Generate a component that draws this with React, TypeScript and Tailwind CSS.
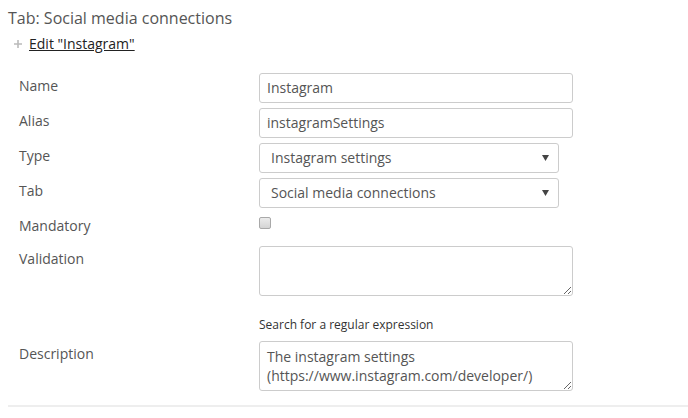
import React from 'react';

const labelCls = 'w-[240px] shrink-0 pt-[3px] text-[14px] leading-[20px] text-[#555]';
const boxCls = 'border border-[#ccc] rounded-[3px] bg-white text-[14px] text-[#555]';

function Row({ label, children, className = '' }: { label: string; children: React.ReactNode; className?: string }) {
  return (
    <div className={`flex ${className}`}>
      <div className={labelCls}>{label}</div>
      <div>{children}</div>
    </div>
  );
}

function TextInput({ value }: { value: string }) {
  return <div className={`${boxCls} h-[30px] w-[314px] px-[7px] leading-[28px]`}>{value}</div>;
}

function Select({ value }: { value: string }) {
  return (
    <div className={`${boxCls} h-[30px] w-[300px] pl-[11px] pr-[8px] flex items-center justify-between`}>
      <span className="leading-[28px]">{value}</span>
      <svg width="7" height="6" viewBox="0 0 7 6" className="mr-[1px]">
        <path d="M0 0 H7 L3.5 6 Z" fill="#444" />
      </svg>
    </div>
  );
}

function TextArea({ value }: { value?: string }) {
  return (
    <textarea
      readOnly
      defaultValue={value}
      className={`${boxCls} block h-[50px] w-[314px] px-[7px] pt-[5px] leading-[19px] outline-none`}
    />
  );
}

export default function App() {
  return (
    <div className="w-[688px] h-[418px] bg-white font-['Open_Sans',sans-serif] overflow-hidden">
      <div className="pl-[8px] pt-[7px] text-[16px] leading-[22px] text-[#555]">Tab: Social media connections</div>
      <div className="mt-[5px] pl-[14px] flex items-center gap-[7px] text-[14px] leading-[20px]">
        <svg width="8" height="8" viewBox="0 0 8 8">
          <path d="M4 0 V8 M0 4 H8" stroke="#bbb" strokeWidth="1.6" />
        </svg>
        <a className="underline text-[#222]">Edit "Instagram"</a>
      </div>

      <div className="mt-[19px] pl-[19px] flex flex-col">
        <Row label="Name" className="mb-[5px]">
          <TextInput value="Instagram" />
        </Row>
        <Row label="Alias" className="mb-[5px]">
          <TextInput value="instagramSettings" />
        </Row>
        <Row label="Type" className="mb-[5px]">
          <Select value="Instagram settings" />
        </Row>
        <Row label="Tab" className="mb-[5px]">
          <Select value="Social media connections" />
        </Row>
        <Row label="Mandatory" className="h-[28px] mb-[5px]">
          <div className="mt-[4px] w-[12px] h-[12px] rounded-[2px] border border-[#a9a9a9] bg-gradient-to-b from-[#ececec] to-[#d4d4d4]" />
        </Row>
        <Row label="Validation">
          <TextArea />
          <div className="mt-[20px] text-[12px] leading-[18px] text-[#333]">Search for a regular expression</div>
        </Row>
        <Row label="Description" className="mt-[7px]">
          <TextArea value={'The instagram settings\n(https://www.instagram.com/developer/)'} />
        </Row>
      </div>
      <div className="ml-[8px] mt-[14px] h-[2px] bg-[#eee]" />
    </div>
  );
}
